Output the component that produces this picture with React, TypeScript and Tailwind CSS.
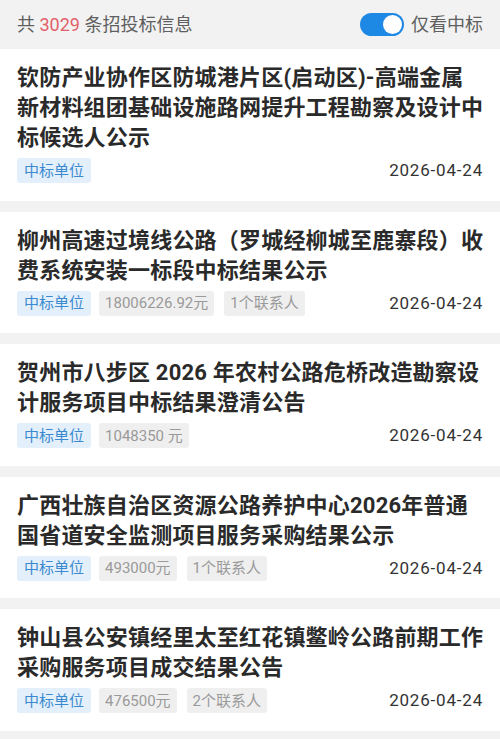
import React, { useState } from "react";

type Notice = {
  lines: string[];
  amount?: string;
  contacts?: string;
  date: string;
};

const notices: Notice[] = [
  {
    lines: [
      "钦防产业协作区防城港片区(启动区)-高端金属",
      "新材料组团基础设施路网提升工程勘察及设计中",
      "标候选人公示",
    ],
    date: "2026-04-24",
  },
  {
    lines: ["柳州高速过境线公路（罗城经柳城至鹿寨段）收", "费系统安装一标段中标结果公示"],
    amount: "18006226.92元",
    contacts: "1个联系人",
    date: "2026-04-24",
  },
  {
    lines: ["贺州市八步区 2026 年农村公路危桥改造勘察设", "计服务项目中标结果澄清公告"],
    amount: "1048350 元",
    date: "2026-04-24",
  },
  {
    lines: ["广西壮族自治区资源公路养护中心2026年普通", "国省道安全监测项目服务采购结果公示"],
    amount: "493000元",
    contacts: "1个联系人",
    date: "2026-04-24",
  },
  {
    lines: ["钟山县公安镇经里太至红花镇鳖岭公路前期工作", "采购服务项目成交结果公告"],
    amount: "476500元",
    contacts: "2个联系人",
    date: "2026-04-24",
  },
];

const font = "font-['Roboto','Noto_Sans_CJK_SC',sans-serif]";

const NoticeCard = ({ notice }: { notice: Notice }) => (
  <div className="bg-white px-[17px] pt-[14px] pb-[17px] mb-[11px]">
    {/* title */}
    <div className="text-[22px] leading-[30px] font-bold text-[#2a2a2a] tracking-[0.2px]">
      {notice.lines.map((line, i) => (
        <div key={i} className="whitespace-nowrap">
          {line}
        </div>
      ))}
    </div>

    {/* tags + date */}
    <div className="mt-[5px] flex items-center">
      <span className="h-[25px] px-[7px] rounded-[3px] bg-[#e3f0fb] text-[#3b8ad0] text-[15px] flex items-center">
        中标单位
      </span>
      {notice.amount && (
        <span className="ml-[8px] h-[25px] px-[6px] rounded-[3px] bg-[#efefef] text-[#9a9a9a] text-[15px] flex items-center">
          {notice.amount}
        </span>
      )}
      {notice.contacts && (
        <span className="ml-[10px] h-[25px] px-[6px] rounded-[3px] bg-[#efefef] text-[#9a9a9a] text-[15px] flex items-center">
          {notice.contacts}
        </span>
      )}
      <span className="ml-auto text-[17px] text-[#333] tracking-[0.8px]">{notice.date}</span>
    </div>
  </div>
);

const App = () => {
  const [onlyWin, setOnlyWin] = useState(true);

  return (
    <div className={`min-h-screen bg-[#f2f2f2] ${font}`}>
      {/* header */}
      <div className="h-[49px] px-[17px] flex items-center justify-between">
        <div className="text-[18px] text-[#5f5f5f]">
          共 <span className="text-[#e2606a]">3029</span> 条招投标信息
        </div>
        <button className="flex items-center" onClick={() => setOnlyWin(!onlyWin)}>
          <span
            className={`w-[44px] h-[23px] rounded-full flex items-center px-[2px] ${
              onlyWin ? "bg-[#1e88e5] justify-end" : "bg-[#cccccc] justify-start"
            }`}
          >
            <span className="w-[19px] h-[19px] rounded-full bg-white" />
          </span>
          <span className="ml-[7px] text-[18px] text-[#5f5f5f]">仅看中标</span>
        </button>
      </div>

      {notices.map((n, i) => (
        <NoticeCard key={i} notice={n} />
      ))}
    </div>
  );
};

export default App;
